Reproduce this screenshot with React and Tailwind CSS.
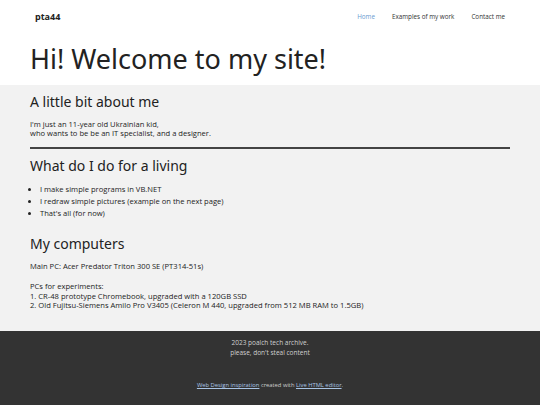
import React from "react";

const heading = { fontFamily: "'Noto Sans', sans-serif" };

function App() {
  return (
    <div className="min-h-[405px] flex flex-col text-[#222]" style={{ fontFamily: "'Open Sans', 'Noto Sans', sans-serif" }}>
      <header className="bg-white px-[30px]">
        <nav className="flex items-center justify-between h-[33px] pl-[5px] pr-[5px]">
          <div className="text-[9px] font-bold">pta44</div>
          <ul className="flex gap-[17px] text-[6.3px] text-[#333]">
            <li className="text-[#6b9bd1]">Home</li>
            <li>Examples of my work</li>
            <li>Contact me</li>
          </ul>
        </nav>
        <h1 className="text-[27px] leading-[51px] pb-[1px]" style={heading}>
          Hi! Welcome to my site!
        </h1>
      </header>

      <main className="bg-[#f2f2f2] px-[30px] pt-[7px] pb-[16px] flex-1">
        <h2 className="text-[14px] leading-[20px]" style={heading}>A little bit about me</h2>
        <p className="text-[7.6px] leading-[9px] mt-[8px]">
          I'm just an 11-year old Ukrainian kid,<br />
          who wants to be be an IT specialist, and a designer.
        </p>
        <hr className="border-0 h-[1.5px] bg-[#444] mt-[9px]" />

        <h2 className="text-[14px] leading-[20px] mt-[7px]" style={heading}>What do I do for a living</h2>
        <ul className="text-[7.6px] leading-[12px] mt-[7px] list-disc pl-[10px]">
          <li>I make simple programs in VB.NET</li>
          <li>I redraw simple pictures (example on the next page)</li>
          <li>That's all (for now)</li>
        </ul>

        <h2 className="text-[14px] leading-[20px] mt-[15px]" style={heading}>My computers</h2>
        <p className="text-[7.6px] leading-[9.5px] mt-[8px]">Main PC: Acer Predator Triton 300 SE (PT314-51s)</p>
        <p className="text-[7.6px] leading-[9.5px] mt-[11px]">
          PCs for experiments:<br />
          1. CR-48 prototype Chromebook, upgraded with a 120GB SSD<br />
          2. Old Fujitsu-Siemens Amilo Pro V3405 (Celeron M 440, upgraded from 512 MB RAM to 1.5GB)
        </p>
      </main>

      <footer className="bg-[#333] text-[#d0d0d0] text-center h-[74px] pt-[7px]">
        <p className="text-[6.5px] leading-[9.5px]">2023 poalch tech archive.<br />please, don't steal content</p>
        <p className="mt-[24px] text-[5.8px] leading-[9px]">
          <a className="underline text-[#a9c4e4]">Web Design inspiration</a> created with{" "}
          <a className="underline text-[#a9c4e4]">Live HTML editor</a>.
        </p>
      </footer>
    </div>
  );
}

export default App;
